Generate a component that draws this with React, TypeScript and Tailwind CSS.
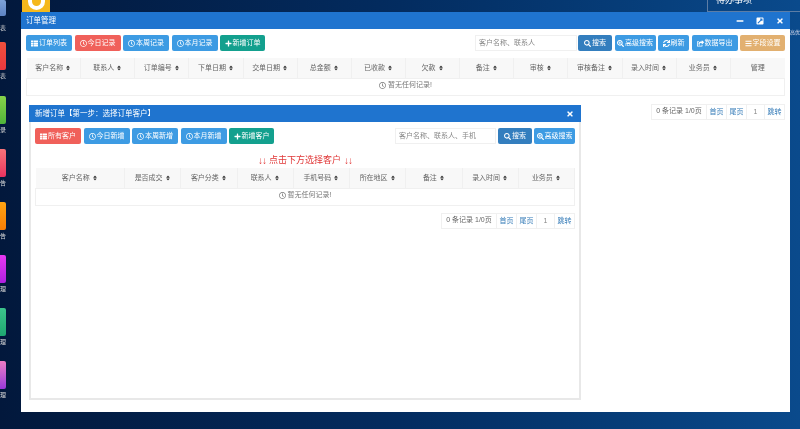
import type { ReactNode } from "react";
import { FaRegClock, FaPlus, FaSearch, FaSearchPlus, FaSync, FaShareSquare, FaBars, FaSort, FaThList, FaTimes, FaMinus, FaExternalLinkSquareAlt } from "react-icons/fa";

const FONT = "font-['Liberation_Sans','Noto_Sans_CJK_SC',sans-serif]";

const ORDER_COLUMNS = ["客户名称", "联系人", "订单编号", "下单日期", "交单日期", "总金额", "已收款", "欠款", "备注", "审核", "审核备注", "录入时间", "业务员"];
const CUSTOMER_COLUMNS = ["客户名称", "是否成交", "客户分类", "联系人", "手机号码", "所在地区", "备注", "录入时间", "业务员"];

const DOCK = [
  { icon: "h-[16px] mb-[6px]", text: "h-[20px]", label: "表", color: "from-[#7da2d8] to-[#5d83c4]" },
  { icon: "h-[28px]", text: "h-[26px]", label: "表", color: "from-[#f0503c] to-[#e8373f]" },
  { icon: "h-[28px]", text: "h-[25px]", label: "录", color: "from-[#86d24a] to-[#4fb53a]" },
  { icon: "h-[28px]", text: "h-[25px]", label: "告", color: "from-[#f7737a] to-[#e8305f]" },
  { icon: "h-[28px]", text: "h-[25px]", label: "告", color: "from-[#ffa412] to-[#f77d05]" },
  { icon: "h-[28px]", text: "h-[25px]", label: "理", color: "from-[#e838f2] to-[#b01fe0]" },
  { icon: "h-[28px]", text: "h-[25px]", label: "理", color: "from-[#3cc48c] to-[#1da871]" },
  { icon: "h-[28px]", text: "h-[25px]", label: "理", color: "from-[#ee7cc4] to-[#9a35d8]" },
];

function Btn({ color, width, icon, children }: { color: string; width: string; icon: ReactNode; children: ReactNode }) {
  return (
    <div className={`flex h-[16px] items-center justify-center gap-[1px] rounded-[2px] text-[7px] whitespace-nowrap text-white ${color} ${width}`}>
      {icon}
      <span>{children}</span>
    </div>
  );
}

function SortLabel({ label }: { label: string }) {
  return (
    <span className="inline-flex items-center gap-[2px]">
      {label}
      <FaSort className="text-[6px] text-[#333]" />
    </span>
  );
}

function Pager() {
  return (
    <div className="flex h-[16px] items-center border border-[#f0f0f0] text-[7px] text-[#666]">
      <span className="w-[54px] text-center">0 条记录 1/0页</span>
      <span className="w-[20px] border-l border-[#f0f0f0] text-center leading-[14px] text-[#337ab7]">首页</span>
      <span className="w-[20px] border-l border-[#f0f0f0] text-center leading-[14px] text-[#337ab7]">尾页</span>
      <span className="w-[18px] border-l border-[#f0f0f0] text-center leading-[14px] text-[#888]">1</span>
      <span className="w-[20px] border-l border-[#f0f0f0] text-center leading-[14px] text-[#337ab7]">跳转</span>
    </div>
  );
}

function EmptyRow({ span }: { span: number }) {
  return (
    <tr>
      <td colSpan={span} className="h-[17px] border border-[#f0f0f0] text-center text-[7px] text-[#777]">
        <span className="inline-flex items-center gap-[2px]">
          <FaRegClock className="text-[7px]" />
          暂无任何记录!
        </span>
      </td>
    </tr>
  );
}

const clock = <FaRegClock className="text-[7px]" />;
const plus = <FaPlus className="text-[7px]" />;
const listIcon = <FaThList className="text-[7px]" />;

function CustomerDialog() {
  return (
    <div className="absolute left-[8px] top-[93px] flex h-[295px] w-[552px] flex-col border-x-2 border-b-2 border-[#e8e8e8] bg-white">
      <div className="mx-[-2px] flex h-[17px] shrink-0 items-center justify-between bg-[#1f74cf] pl-[6px] pr-[7px] text-[7.5px] text-white">
        <span>新增订单【第一步：选择订单客户】</span>
        <FaTimes className="text-[8px]" />
      </div>
      <div className="flex flex-col px-[4px]">
        <div className="mt-[6px] flex items-center gap-[2.5px]">
          <Btn color="bg-[#f0605a]" width="w-[46px]" icon={listIcon}>所有客户</Btn>
          <Btn color="bg-[#3d9be3]" width="w-[46px]" icon={clock}>今日新增</Btn>
          <Btn color="bg-[#3d9be3]" width="w-[46px]" icon={clock}>本周新增</Btn>
          <Btn color="bg-[#3d9be3]" width="w-[46px]" icon={clock}>本月新增</Btn>
          <Btn color="bg-[#13a08e]" width="w-[45px]" icon={plus}>新增客户</Btn>
          <div className="ml-auto flex items-center gap-[2px]">
            <div className="flex h-[16px] w-[101px] items-center border border-[#f0f0f0] pl-[3px] text-[7px] text-[#888]">客户名称、联系人、手机</div>
            <Btn color="bg-[#337ebe]" width="w-[34px]" icon={<FaSearch className="text-[7px]" />}>搜索</Btn>
            <Btn color="bg-[#3d9be3]" width="w-[41px]" icon={<FaSearchPlus className="text-[7px]" />}>高级搜索</Btn>
          </div>
        </div>
        <p className="mt-[9px] flex h-[15px] items-center justify-center gap-[3px] text-[9px] leading-[15px] text-[#e03636]">
          <span className="text-[10px] font-bold tracking-[-1px]">↓↓</span>
          点击下方选择客户
          <span className="text-[10px] font-bold tracking-[-1px]">↓↓</span>
        </p>
        <table className="w-full table-fixed border-collapse">
          <thead>
            <tr className="h-[20px] bg-[#f8f8f8]">
              {CUSTOMER_COLUMNS.map((c, i) => (
                <th key={c} className={`border-r border-[#f0f0f0] text-center text-[7px] font-normal text-[#666] ${i === 0 ? "w-[89px]" : ""}`}>
                  <SortLabel label={c} />
                </th>
              ))}
            </tr>
          </thead>
          <tbody>
            <EmptyRow span={9} />
          </tbody>
        </table>
        <div className="mt-[7px] flex justify-end">
          <Pager />
        </div>
      </div>
    </div>
  );
}

export default function App() {
  return (
    <div className={`relative h-[429px] w-[800px] overflow-hidden bg-gradient-to-r from-[#02183c] via-[#032c60] to-[#0a4a8c] blur-[0.35px] ${FONT}`}>
      {/* 桌面左侧图标，被窗口挡住大半 */}
      <div className="flex w-[7px] flex-col">
        {DOCK.map((d, i) => (
          <div key={i}>
            <div className={`${d.icon} w-[6px] rounded-r-[2px] bg-gradient-to-b ${d.color}`} />
            <div className={`${d.text} pt-[2px] text-[6px] leading-[9px] text-[#d8d8d8]`}>{d.label}</div>
          </div>
        ))}
      </div>

      <div className="absolute left-[22px] top-0 h-[12px] w-[28px] overflow-hidden bg-[#f5b81c]">
        <div className="absolute left-[6px] top-[-10px] h-[20px] w-[17px] rounded-full border-[4px] border-white" />
      </div>

      <div className="absolute left-[707px] top-[-6px] h-[18px] w-[93px] border-b border-l border-[#5d7da5] pl-[8px] text-[9px] text-white">
        待办事项
      </div>
      <div className="absolute left-[790px] top-[29px] whitespace-nowrap text-[5px] text-[#dde]">高优</div>

      <div className="absolute left-[21px] top-[12px] h-[400px] w-[769px] bg-white">
        <div className="flex h-[17px] items-center justify-between bg-[#1f74cf] pl-[5px] pr-[6px] text-[7.5px] text-white">
          <span>订单管理</span>
          <div className="flex items-center gap-[12px]">
            <FaMinus className="text-[8px]" />
            <FaExternalLinkSquareAlt className="text-[8px]" />
            <FaTimes className="text-[8px]" />
          </div>
        </div>

        <div className="px-[5px]">
          <div className="mt-[6px] flex items-center gap-[2.5px]">
            <Btn color="bg-[#3d9be3]" width="w-[46px]" icon={listIcon}>订单列表</Btn>
            <Btn color="bg-[#f0605a]" width="w-[46px]" icon={clock}>今日记录</Btn>
            <Btn color="bg-[#3d9be3]" width="w-[46px]" icon={clock}>本周记录</Btn>
            <Btn color="bg-[#3d9be3]" width="w-[46px]" icon={clock}>本月记录</Btn>
            <Btn color="bg-[#13a08e]" width="w-[45px]" icon={plus}>新增订单</Btn>
            <div className="ml-auto flex items-center gap-[2.5px]">
              <div className="mr-[-1.5px] flex h-[16px] w-[102px] items-center border border-[#f0f0f0] pl-[3px] text-[7px] text-[#888]">客户名称、联系人</div>
              <Btn color="bg-[#337ebe]" width="w-[34px]" icon={<FaSearch className="text-[7px]" />}>搜索</Btn>
              <Btn color="bg-[#3d9be3]" width="w-[41px]" icon={<FaSearchPlus className="text-[7px]" />}>高级搜索</Btn>
              <Btn color="bg-[#3d9be3]" width="w-[31px]" icon={<FaSync className="text-[7px]" />}>刷新</Btn>
              <Btn color="bg-[#3d9be3]" width="w-[46px]" icon={<FaShareSquare className="text-[7px]" />}>数据导出</Btn>
              <Btn color="bg-[#e2b070]" width="w-[45px]" icon={<FaBars className="text-[7px]" />}>字段设置</Btn>
            </div>
          </div>

          <table className="mt-[7px] w-full table-fixed border-collapse">
            <thead>
              <tr className="h-[20px] bg-[#f8f8f8]">
                {ORDER_COLUMNS.map((c) => (
                  <th key={c} className="border-r border-[#f0f0f0] text-center text-[7px] font-normal text-[#666]">
                    <SortLabel label={c} />
                  </th>
                ))}
                <th className="text-center text-[7px] font-normal text-[#666]">管理</th>
              </tr>
            </thead>
            <tbody>
              <EmptyRow span={14} />
            </tbody>
          </table>

          <div className="mt-[8px] flex justify-end">
            <Pager />
          </div>
        </div>

        <CustomerDialog />
      </div>
    </div>
  );
}
